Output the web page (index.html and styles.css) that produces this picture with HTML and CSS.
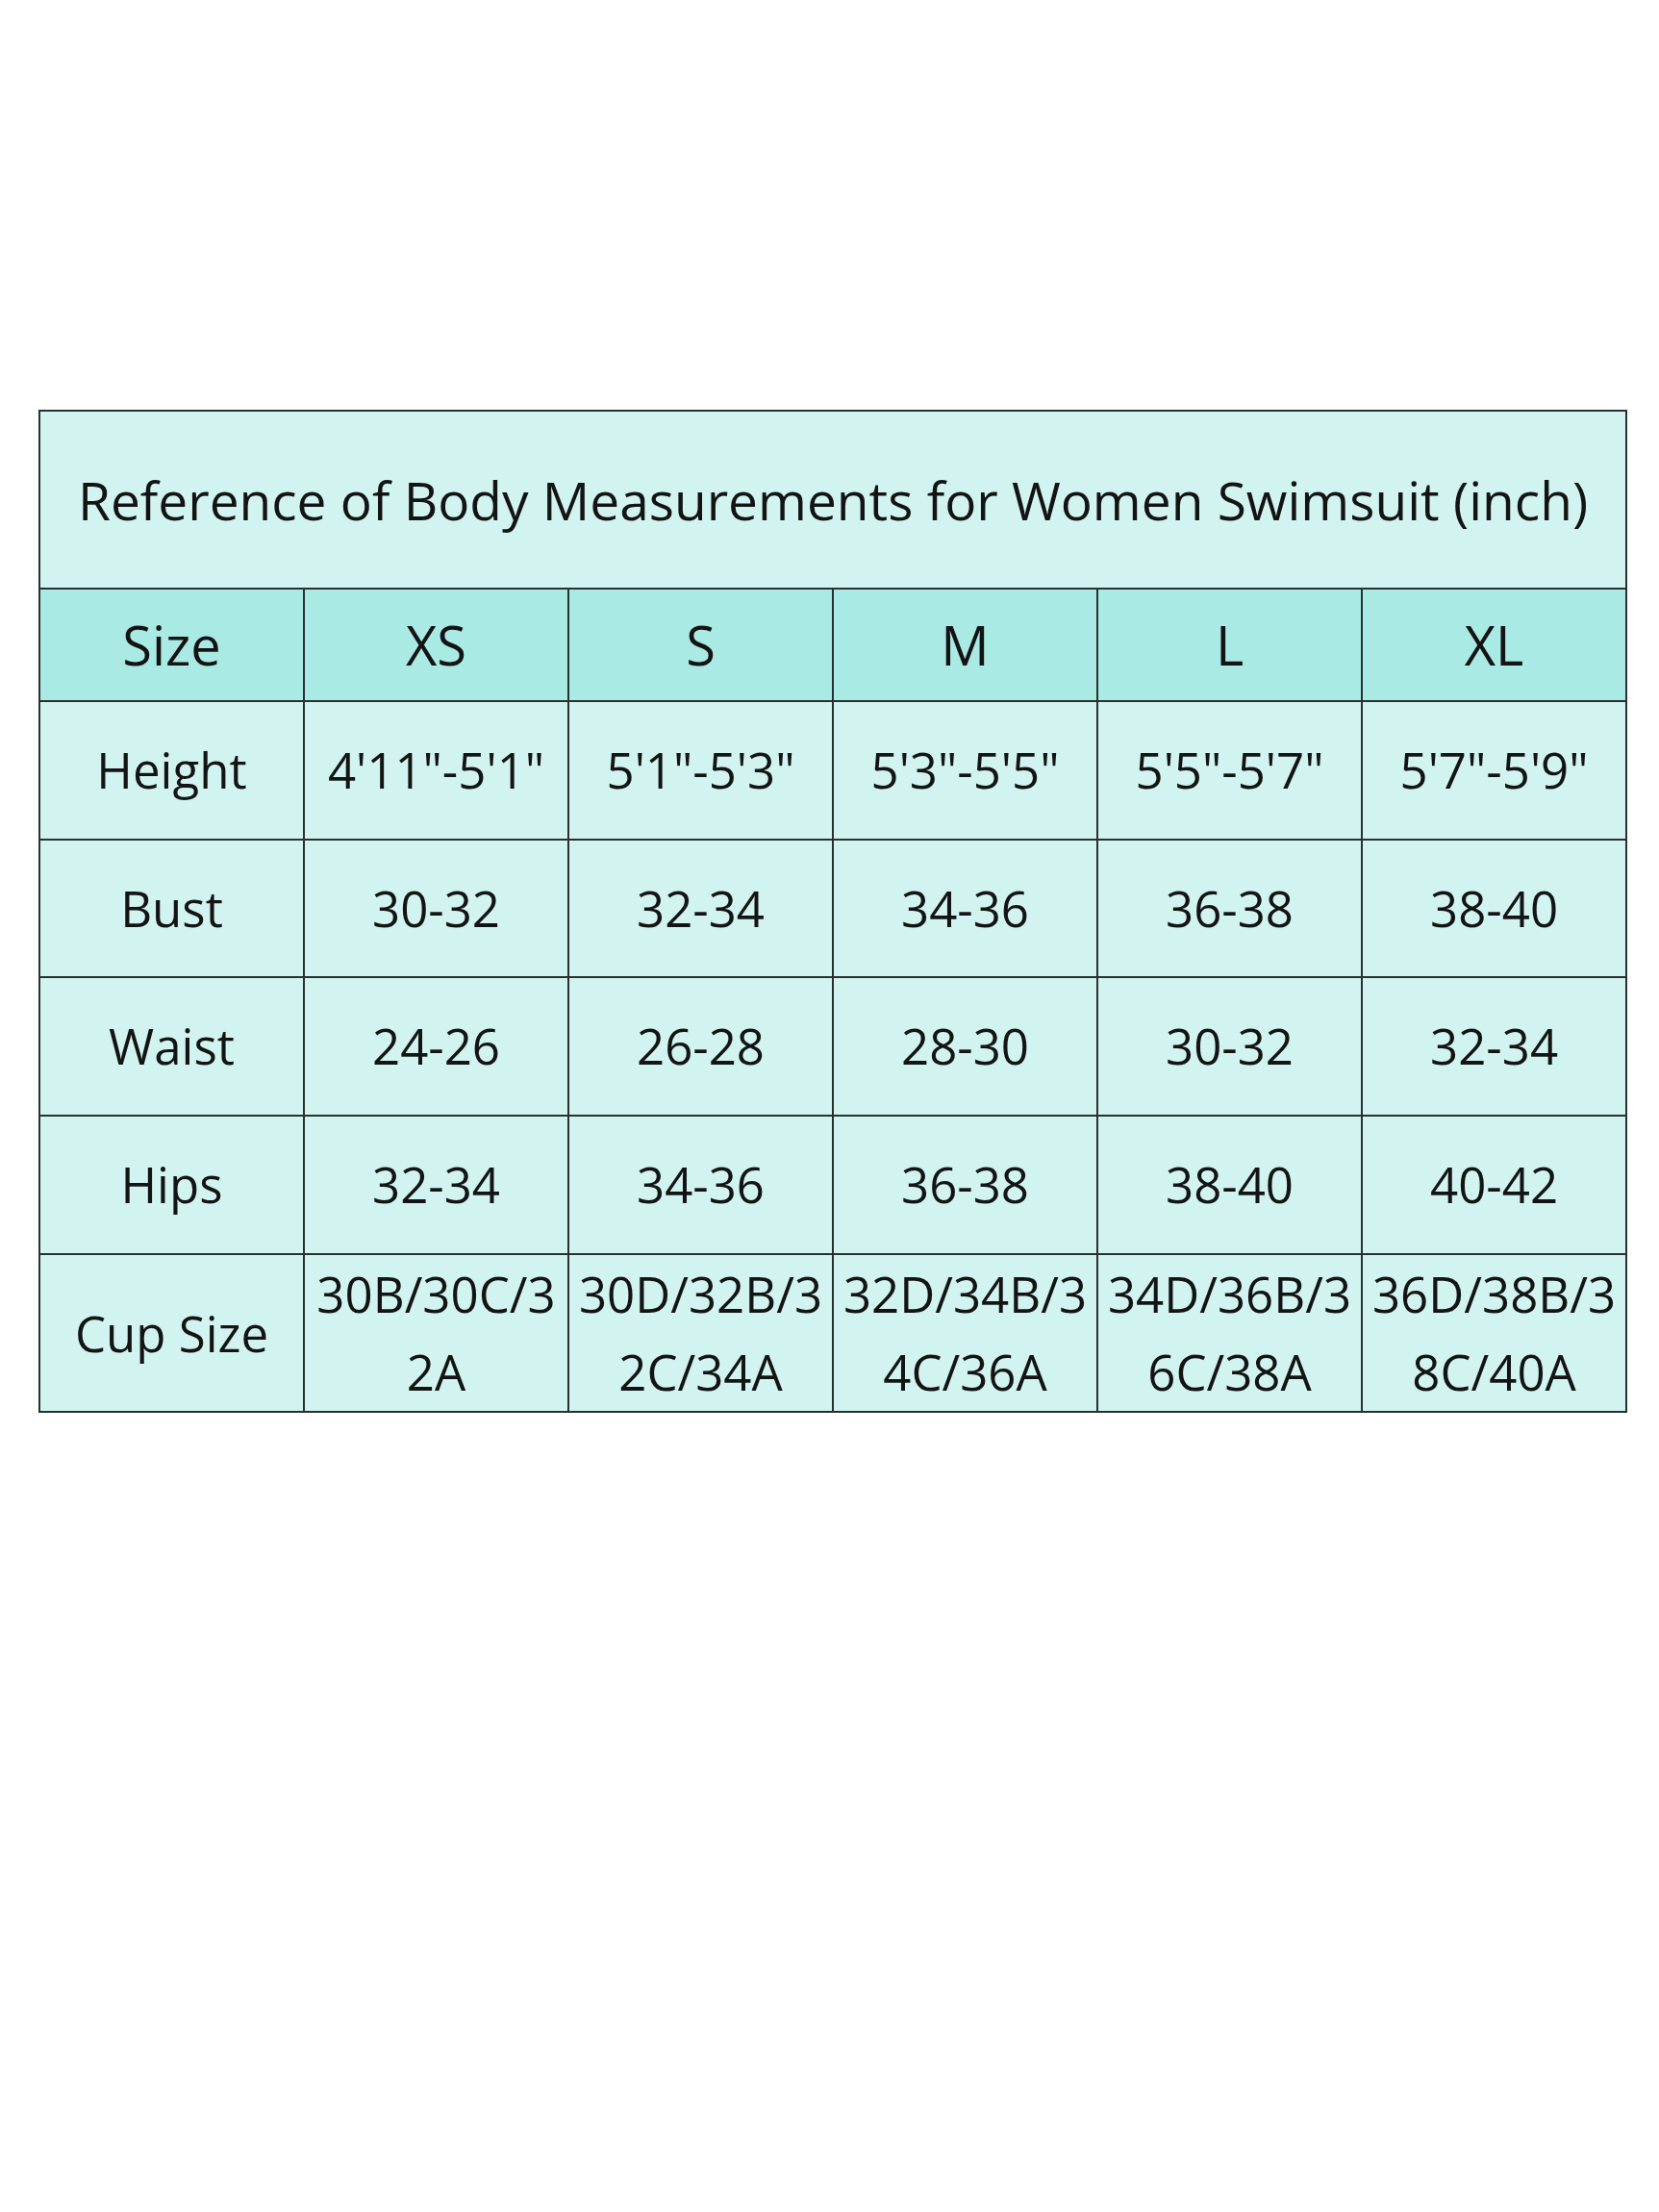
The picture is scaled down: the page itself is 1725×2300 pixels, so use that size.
FILE: index.html
```html
<!DOCTYPE html>
<html lang="en">
<head>
<meta charset="utf-8">
<title>Reference of Body Measurements for Women Swimsuit</title>
<link rel="stylesheet" href="styles.css">
</head>
<body>
<table class="chart">
  <colgroup>
    <col class="c"><col class="c"><col class="c"><col class="c"><col class="c"><col class="c">
  </colgroup>
  <tr class="title-row"><td colspan="6" class="title">Reference of Body Measurements for Women Swimsuit (inch)</td></tr>
  <tr class="head-row"><td>Size</td><td>XS</td><td>S</td><td>M</td><td>L</td><td>XL</td></tr>
  <tr class="data-row"><td>Height</td><td>4'11"-5'1"</td><td>5'1"-5'3"</td><td>5'3"-5'5"</td><td>5'5"-5'7"</td><td>5'7"-5'9"</td></tr>
  <tr class="data-row r2"><td>Bust</td><td>30-32</td><td>32-34</td><td>34-36</td><td>36-38</td><td>38-40</td></tr>
  <tr class="data-row"><td>Waist</td><td>24-26</td><td>26-28</td><td>28-30</td><td>30-32</td><td>32-34</td></tr>
  <tr class="data-row"><td>Hips</td><td>32-34</td><td>34-36</td><td>36-38</td><td>38-40</td><td>40-42</td></tr>
  <tr class="cup-row"><td>Cup Size</td><td>30B/30C/3<br>2A</td><td>30D/32B/3<br>2C/34A</td><td>32D/34B/3<br>4C/36A</td><td>34D/36B/3<br>6C/38A</td><td>36D/38B/3<br>8C/40A</td></tr>
</table>
</body>
</html>
```
FILE: styles.css
```css
html, body {
  margin: 0;
  padding: 0;
  background: #ffffff;
}

body {
  padding: 426px 0 0 40px;
  font-family: "Open Sans", "Noto Sans CJK KR", sans-serif;
  color: #141414;
}

.chart {
  table-layout: fixed;
  border-collapse: collapse;
  width: 1652px;
  background: #d1f4f1;
}

.chart .c {
  width: 275px;
}

.chart td {
  border: 2px solid #2b2f2f;
  text-align: center;
  vertical-align: middle;
  padding: 0 4px;
  white-space: nowrap;
  font-size: 51px;
  line-height: 1.2;
}

.title-row td {
  height: 183px;
  font-size: 55px;
  background: #d1f4f1;
}

.head-row td {
  height: 115px;
  font-size: 56px;
  background: #a9eae4;
}

.data-row td {
  height: 142px;
}

.data-row.r2 td {
  height: 141px;
}

.cup-row td {
  height: 162px;
  line-height: 81px;
}
```
